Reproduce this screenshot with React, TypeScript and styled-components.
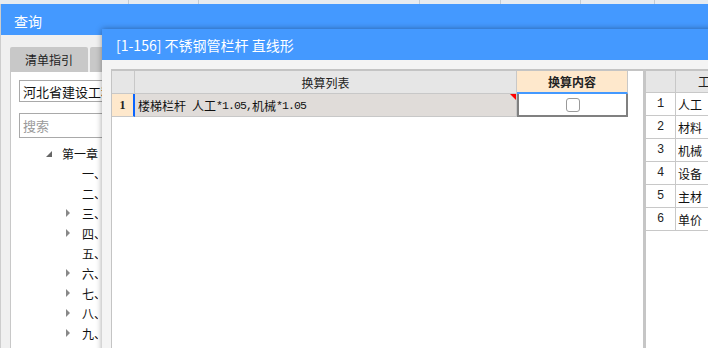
import React from 'react';
import styled, { createGlobalStyle } from 'styled-components';

const GlobalStyle = createGlobalStyle`
  html, body { margin: 0; padding: 0; background: #f0f0f0; overflow: hidden; }
  body { font-family: "Noto Sans CJK SC", "Noto Sans", sans-serif; color: #222; }
  * { box-sizing: border-box; }
`;

const CJK = `"Noto Sans CJK SC", "Noto Sans", sans-serif`;

const Desktop = styled.div`
  position: relative;
  width: 708px;
  height: 348px;
  overflow: hidden;
  background: #f0f0f0;
`;

const AppHeader = styled.div`
  display: flex;
  height: 4px;
  background: #e6ebf0;
`;

const AppHeaderCell = styled.div<{ $w: number }>`
  flex: none;
  width: ${(p) => p.$w}px;
  border-right: 1px solid #c3cbd3;
`;

const Window = styled.section<{ $x: number; $y: number; $w: number; $h: number; $shadow?: boolean }>`
  position: absolute;
  left: ${(p) => p.$x}px;
  top: ${(p) => p.$y}px;
  width: ${(p) => p.$w}px;
  height: ${(p) => p.$h}px;
  display: flex;
  flex-direction: column;
  box-shadow: ${(p) => (p.$shadow ? '0 0 6px rgba(0,0,0,0.38)' : 'none')};
  border-left: ${(p) => (p.$shadow ? 'none' : '1px solid #cdcdcd')};
`;

const TitleBar = styled.header<{ $pl: number; $pt: number }>`
  flex: none;
  height: 31px;
  display: flex;
  align-items: center;
  padding-left: ${(p) => p.$pl}px;
  padding-top: ${(p) => p.$pt}px;
  background: #4499ff;
  color: #fff;
  font-family: ${CJK};
  font-size: 14px;
  white-space: nowrap;
`;

/* ---------- outer "查询" window ---------- */

const OuterBody = styled.div`
  flex: 1;
  display: flex;
  flex-direction: column;
  background: #f0f0f0;
  padding: 12px 0 0 9px;
`;

const Tabs = styled.div`
  display: flex;
  gap: 2px;
  height: 25px;
`;

const Tab = styled.div`
  width: 78px;
  display: flex;
  align-items: center;
  justify-content: center;
  background: #c8c8c8;
  border-radius: 2px 2px 0 0;
  font-size: 12px;
  color: #222;
`;

const Panel = styled.div`
  flex: 1;
  background: #fff;
  border-left: 1px solid #c8c8c8;
  padding: 8px 0 0 8px;
  display: flex;
  flex-direction: column;
`;

const Field = styled.div<{ $h: number; $muted?: boolean }>`
  width: 220px;
  height: ${(p) => p.$h}px;
  border: 1px solid #a9a9a9;
  display: flex;
  align-items: center;
  padding-left: 3px;
  font-size: 13px;
  color: ${(p) => (p.$muted ? '#9a9a9a' : '#111')};
  white-space: nowrap;
  overflow: hidden;
`;

const FieldGap = styled.div`
  height: 11px;
`;

const Tree = styled.div`
  width: 79px;
  overflow: hidden;
  margin-top: 5px;
  display: flex;
  flex-direction: column;
`;

const TreeRow = styled.div<{ $level: number }>`
  height: 20px;
  flex: none;
  display: flex;
  align-items: center;
  padding-left: ${(p) => 27 + p.$level * 20}px;
  font-size: 12px;
  color: #111;
  white-space: nowrap;
`;

const ArrowBox = styled.span`
  width: 16px;
  flex: none;
  display: flex;
  align-items: center;
`;

const Expanded = styled.span`
  width: 0;
  height: 0;
  border-left: 6px solid transparent;
  border-bottom: 6px solid #666;
  margin-top: 1px;
`;

const Collapsed = styled.span`
  width: 0;
  height: 0;
  border-top: 4px solid transparent;
  border-bottom: 4px solid transparent;
  border-left: 4px solid #888;
`;

/* ---------- inner dialog ---------- */

const InnerBody = styled.div`
  flex: 1;
  display: flex;
  background: #f4f4f4;
  padding: 9px 0 0 9px;
`;

const Grid = styled.div<{ $w?: number }>`
  ${(p) => (p.$w ? `width: ${p.$w}px; flex: none;` : 'flex: 1; min-width: 0;')}
  display: flex;
  flex-direction: column;
  background: #fff;
  border-top: 2px solid #c4c4c4;
  border-left: ${(p) => (p.$w ? '1px solid #c4c4c4' : 'none')};
`;

const Splitter = styled.div`
  width: 3px;
  flex: none;
  background: #c6c6c6;
`;

const Row = styled.div<{ $cols: string; $h: number }>`
  display: grid;
  grid-template-columns: ${(p) => p.$cols};
  height: ${(p) => p.$h}px;
`;

const HeadCell = styled.div<{ $accent?: boolean }>`
  min-width: 0;
  display: flex;
  align-items: center;
  justify-content: center;
  background: ${(p) => (p.$accent ? '#fee8cc' : '#e6e6e6')};
  border-right: 1px solid #c8c8c8;
  border-bottom: ${(p) => (p.$accent ? '2px solid #4499ff' : '1px solid #c8c8c8')};
  font-size: 12px;
  font-weight: ${(p) => (p.$accent ? 700 : 400)};
  color: #222;
  white-space: nowrap;
  overflow: hidden;
`;

const HeadLeft = styled(HeadCell)`
  justify-content: flex-start;
  padding-left: 22px;
`;

const RowNum = styled.div<{ $active?: boolean }>`
  display: flex;
  align-items: center;
  justify-content: center;
  background: ${(p) => (p.$active ? '#fee8cc' : '#fff')};
  border-right: ${(p) => (p.$active ? '2px solid #0a64ff' : '1px solid #c8c8c8')};
  border-bottom: 1px solid #c8c8c8;
  font-family: ${(p) => (p.$active ? '"Liberation Serif", serif' : '"Liberation Mono", monospace')};
  font-weight: ${(p) => (p.$active ? 700 : 400)};
  font-size: 12px;
  color: #222;
`;

const TextCell = styled.div<{ $bg?: string }>`
  position: relative;
  min-width: 0;
  display: flex;
  align-items: center;
  padding-left: ${(p) => (p.$bg ? 3 : 2)}px;
  background: ${(p) => p.$bg || '#fff'};
  border-right: 1px solid #c8c8c8;
  border-bottom: 1px solid #c8c8c8;
  font-size: 12px;
  color: #111;
  white-space: pre;
  overflow: hidden;
`;

const Mono = styled.span`
  font-family: "Liberation Mono", monospace;
  font-size: 11.5px;
  letter-spacing: -0.9px;
`;

const RedMark = styled.span`
  position: absolute;
  top: 0;
  right: 0;
  width: 0;
  height: 0;
  border-top: 6px solid #ff0000;
  border-left: 6px solid transparent;
`;

const SelectedCell = styled.div`
  display: flex;
  align-items: center;
  justify-content: center;
  background: #fff;
  border: 2px solid #808080;
  border-top: none;
`;

const CheckBox = styled.span`
  width: 14px;
  height: 14px;
  border: 1px solid #9a9a9a;
  border-radius: 3px;
  background: #fff;
`;

const Filler = styled.div`
  flex: 1;
`;

const headerCols = [129, 70, 221, 81, 80, 74, 60];
const chapters: { t: string; kids: boolean }[] = [
  { t: '一、楼地面工程', kids: false },
  { t: '二、墙柱面工程', kids: false },
  { t: '三、天棚工程', kids: true },
  { t: '四、门窗工程', kids: true },
  { t: '五、油漆涂料', kids: false },
  { t: '六、其他工程', kids: true },
  { t: '七、脚手架', kids: true },
  { t: '八、垂直运输', kids: true },
  { t: '九、超高费', kids: true },
  { t: '十、其他', kids: false },
];
const resources = ['人工', '材料', '机械', '设备', '主材', '单价'];

export default function App() {
  return (
    <>
      <GlobalStyle />
      <Desktop>
        <AppHeader>
          {headerCols.map((w, i) => (
            <AppHeaderCell key={i} $w={w} />
          ))}
        </AppHeader>

        <Window $x={0} $y={4} $w={720} $h={360}>
          <TitleBar $pl={13} $pt={3}>查询</TitleBar>
          <OuterBody>
            <Tabs>
              <Tab>清单指引</Tab>
              <Tab>定额指引</Tab>
            </Tabs>
            <Panel>
              <Field $h={22}>河北省建设工程计价依据</Field>
              <FieldGap />
              <Field $h={25} $muted>搜索</Field>
              <Tree>
                <TreeRow $level={0}>
                  <ArrowBox>
                    <Expanded />
                  </ArrowBox>
                  第一章装饰工程
                </TreeRow>
                {chapters.map((c) => (
                  <TreeRow key={c.t} $level={1}>
                    <ArrowBox>{c.kids && <Collapsed />}</ArrowBox>
                    {c.t}
                  </TreeRow>
                ))}
              </Tree>
            </Panel>
          </OuterBody>
        </Window>

        <Window $x={102} $y={29} $w={620} $h={330} $shadow>
          <TitleBar $pl={14} $pt={0}>[1-156] 不锈钢管栏杆 直线形</TitleBar>
          <InnerBody>
            <Grid $w={532}>
              <Row $cols="23px 382px 111px" $h={23}>
                <HeadCell />
                <HeadCell>换算列表</HeadCell>
                <HeadCell $accent>换算内容</HeadCell>
              </Row>
              <Row $cols="23px 382px 111px" $h={23}>
                <RowNum $active>1</RowNum>
                <TextCell $bg="#e0dcd9">
                  {'楼梯栏杆\u2002人工'}
                  <Mono>*1.05,</Mono>
                  {'机械'}
                  <Mono>*1.05</Mono>
                  <RedMark />
                </TextCell>
                <SelectedCell>
                  <CheckBox />
                </SelectedCell>
              </Row>
              <Filler />
            </Grid>
            <Splitter />
            <Grid>
              <Row $cols="30px minmax(0, 1fr)" $h={22}>
                <HeadCell />
                <HeadLeft>工料机名称</HeadLeft>
              </Row>
              {resources.map((r, i) => (
                <Row key={r} $cols="30px minmax(0, 1fr)" $h={23}>
                  <RowNum>{i + 1}</RowNum>
                  <TextCell>{r}</TextCell>
                </Row>
              ))}
              <Filler />
            </Grid>
          </InnerBody>
        </Window>
      </Desktop>
    </>
  );
}
